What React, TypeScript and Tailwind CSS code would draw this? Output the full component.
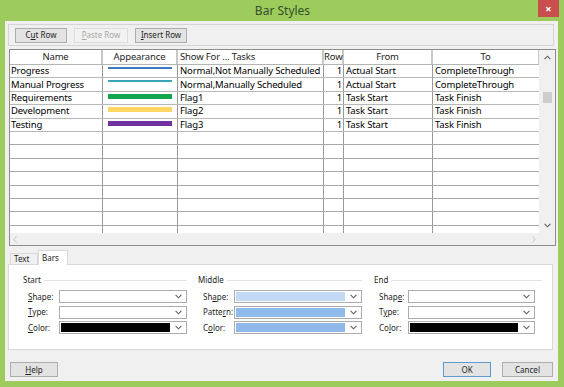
import React from 'react';

const font = 'font-[family-name:Noto_Sans,Open_Sans,sans-serif]';

type Row = {
    name: string;
    color: string;
    thick: boolean;
    show: string;
    from: string;
    to: string;
};

const rows: Row[] = [
    { name: 'Progress', color: '#3d7cc4', thick: false, show: 'Normal,Not Manually Scheduled', from: 'Actual Start', to: 'CompleteThrough' },
    { name: 'Manual Progress', color: '#39a5b8', thick: false, show: 'Normal,Manually Scheduled', from: 'Actual Start', to: 'CompleteThrough' },
    { name: 'Requirements', color: '#13a651', thick: true, show: 'Flag1', from: 'Task Start', to: 'Task Finish' },
    { name: 'Development', color: '#ffd663', thick: true, show: 'Flag2', from: 'Task Start', to: 'Task Finish' },
    { name: 'Testing', color: '#7030a0', thick: true, show: 'Flag3', from: 'Task Start', to: 'Task Finish' },
];

const cols = 'grid grid-cols-[93px_75px_146px_20px_89px_107px]';

function Chevron({ className = '' }: { className?: string }) {
    return (
        <svg width="7" height="5" viewBox="0 0 7 5" className={className}>
            <polyline points="0.6,0.8 3.5,3.8 6.4,0.8" fill="none" stroke="#606060" strokeWidth="1.1" />
        </svg>
    );
}

function Btn({ children, disabled, primary, className = '' }: { children: React.ReactNode; disabled?: boolean; primary?: boolean; className?: string }) {
    return (
        <div
            className={`h-[15px] flex items-center justify-center text-[8px] leading-[10px] border ${
                disabled
                    ? 'bg-[#f2f2f2] border-[#dcdcdc] text-[#a8a8a8]'
                    : primary
                    ? 'bg-[#e3e3e3] border-[#5f9bcf] text-[#1e1e1e]'
                    : 'bg-[#e3e3e3] border-[#adadad] text-[#1e1e1e]'
            } ${className}`}
        >
            {children}
        </div>
    );
}

function Combo({ fill, label, w = 'w-[128px]' }: { fill?: string; label: React.ReactNode; w?: string }) {
    return (
        <div className="flex items-center h-[13px]">
            <div className="flex-1 text-[8px] leading-[10px] text-[#1e1e1e] pl-[5px]">{label}</div>
            <div className={`${w} h-[13px] border border-[#acacac] bg-white flex items-center pl-[1px] pr-[4px]`}>
                <div className="flex-1 h-[9px]" style={fill ? { backgroundColor: fill } : undefined} />
                <Chevron className="ml-[5px]" />
            </div>
        </div>
    );
}

function Group({ title, width, children }: { title: string; width: string; children: React.ReactNode }) {
    return (
        <div className={`${width} flex flex-col`}>
            <div className="h-[12px] flex items-center gap-[3px]">
                <span className="text-[8px] leading-[10px] text-[#1e1e1e]">{title}</span>
                <div className="flex-1 border-t border-[#e3e3e3]" />
            </div>
            <div className="flex flex-col gap-[2.5px] mt-[4px]">{children}</div>
        </div>
    );
}

const U = ({ c }: { c: string }) => <span className="underline underline-offset-[1px]">{c}</span>;

export default function App() {
    const empty = Array.from({ length: 8 });

    return (
        <div className={`w-[564px] h-[387px] bg-[#9dcb5c] flex flex-col overflow-hidden ${font}`}>
            {/* Title bar */}
            <div className="h-[21px] flex items-start">
                <div className="flex-1 pl-[27px] pt-[3px] text-center text-[12px] leading-[15px] text-[#34502a]">Bar Styles</div>
                <div className="w-[21px] h-[17px] mr-[5px] bg-[#c94f4f] flex items-center justify-center text-white text-[11px] font-bold leading-[13px]">
                    ×
                </div>
            </div>

            {/* Body */}
            <div className="ml-[5px] w-[553px] h-[360px] bg-[#f0f0f0] flex flex-col">
                {/* Toolbar */}
                <div className="mt-[3px] ml-[3px] w-[546px] h-[22px] border border-[#d5d5d5] bg-[#f0f0f0] flex items-center pl-[6px] gap-[7px]">
                    <Btn className="w-[52px]">C<U c="u" />t Row</Btn>
                    <Btn className="w-[54px]" disabled><U c="P" />aste Row</Btn>
                    <Btn className="w-[52px]"><U c="I" />nsert Row</Btn>
                </div>

                {/* Table */}
                <div className="mt-[3px] ml-[4px] w-[547px] h-[197px] border border-[#8c8c8c] bg-white flex flex-col text-[9.5px] tracking-[-0.15px] leading-[12px] text-black">
                    <div className="flex h-[183px]">
                        <div className="w-[529px] flex flex-col overflow-hidden">
                            <div className={`${cols} h-[15px] shrink-0 border-b border-[#b5b5b5] text-[#1e1e1e]`}>
                                <div className="border-r-2 border-[#c8c8c8] flex items-center justify-center">Name</div>
                                <div className="border-r-2 border-[#c8c8c8] flex items-center justify-center">Appearance</div>
                                <div className="border-r-2 border-[#c8c8c8] flex items-center pl-[2px]">Show For ... Tasks</div>
                                <div className="border-r-2 border-[#c8c8c8] flex items-center">Row</div>
                                <div className="border-r-2 border-[#c8c8c8] flex items-center justify-center">From</div>
                                <div className="border-r-2 border-[#c8c8c8] flex items-center justify-center">To</div>
                            </div>
                            {rows.map((r) => (
                                <div key={r.name} className={`${cols} h-[13.4px] shrink-0 border-b border-[#b8b8b8]`}>
                                    <div className="border-r border-[#9a9a9a] flex items-center pl-[1px]">{r.name}</div>
                                    <div className="border-r border-[#9a9a9a] pt-[2px] px-[5px]">
                                        <div className={`${r.thick ? 'h-[5px]' : 'h-[2px]'} w-[64px]`} style={{ backgroundColor: r.color }} />
                                    </div>
                                    <div className="border-r border-[#9a9a9a] flex items-center pl-[2px] whitespace-nowrap">{r.show}</div>
                                    <div className="border-r border-[#9a9a9a] flex items-center justify-end pr-[1px]">1</div>
                                    <div className="border-r border-[#9a9a9a] flex items-center pl-[2px]">{r.from}</div>
                                    <div className="border-r border-[#9a9a9a] flex items-center pl-[2px]">{r.to}</div>
                                </div>
                            ))}
                            {empty.map((_, i) => (
                                <div key={i} className={`${cols} h-[13.4px] shrink-0 border-b border-[#a8a8a8]`}>
                                    <div className="border-r border-[#9a9a9a]" />
                                    <div className="border-r border-[#9a9a9a]" />
                                    <div className="border-r border-[#9a9a9a]" />
                                    <div className="border-r border-[#9a9a9a]" />
                                    <div className="border-r border-[#9a9a9a]" />
                                    <div className="border-r border-[#9a9a9a]" />
                                </div>
                            ))}
                        </div>
                        {/* Vertical scrollbar */}
                        <div className="flex-1 bg-[#f0f0f0] flex flex-col items-center">
                            <div className="h-[15px] flex items-center">
                                <Chevron className="rotate-180" />
                            </div>
                            <div className="mt-[27px] w-[9px] h-[11px] bg-[#cdcdcd]" />
                            <div className="flex-1" />
                            <div className="h-[15px] flex items-center">
                                <Chevron />
                            </div>
                        </div>
                    </div>
                    {/* Horizontal scrollbar */}
                    <div className="flex-1 flex">
                        <div className="w-[529px] bg-[#f0f0f0] flex items-center justify-between px-[3px]">
                            <svg width="4" height="7" viewBox="0 0 4 7">
                                <polyline points="3.5,0.5 0.8,3.5 3.5,6.5" fill="none" stroke="#c4c4c4" strokeWidth="1" />
                            </svg>
                            <svg width="4" height="7" viewBox="0 0 4 7">
                                <polyline points="0.5,0.5 3.2,3.5 0.5,6.5" fill="none" stroke="#c4c4c4" strokeWidth="1" />
                            </svg>
                        </div>
                        <div className="flex-1 bg-[#f0f0f0]" />
                    </div>
                </div>

                {/* Tabs */}
                <div className="mt-[4px] ml-[5px] h-[14px] flex items-end text-[8px] leading-[10px] text-[#1e1e1e]">
                    <div className="w-[28px] h-[11px] border border-b-0 border-[#d9d9d9] bg-[#f0f0f0] flex items-center pl-[3px]">Text</div>
                    <div className="w-[30px] h-[15px] border border-b-0 border-[#d9d9d9] bg-white -mb-[1px] relative z-10 flex items-start pt-[2px] pl-[3px]">
                        Bars
                    </div>
                </div>

                {/* Tab panel */}
                <div className="ml-[3px] w-[545px] h-[86px] border border-[#d9d9d9] bg-white flex pt-[9px] pl-[14px]">
                    <Group title="Start" width="w-[164px]">
                        <Combo label={<><U c="S" />hape:</>} />
                        <Combo label={<><U c="T" />ype:</>} />
                        <Combo label={<><U c="C" />olor:</>} fill="#000000" />
                    </Group>
                    <div className="w-[11px]" />
                    <Group title="Middle" width="w-[164px]">
                        <Combo label={<>Sh<U c="a" />pe:</>} fill="#c2daf6" />
                        <Combo label={<>Patte<U c="r" />n:</>} fill="#8dbbec" />
                        <Combo label={<>C<U c="o" />lor:</>} fill="#8eb9ea" />
                    </Group>
                    <div className="w-[12px]" />
                    <Group title="End" width="w-[168px]">
                        <div className="pr-[7px] flex flex-col gap-[2.5px]">
                            <Combo label={<>Shap<U c="e" />:</>} w="w-[127px]" />
                            <Combo label={<>T<U c="y" />pe:</>} w="w-[127px]" />
                            <Combo label={<>Co<U c="l" />or:</>} w="w-[127px]" fill="#000000" />
                        </div>
                    </Group>
                </div>

                {/* Footer buttons */}
                <div className="mt-[12px] flex items-center">
                    <Btn className="ml-[5px] w-[48px]"><U c="H" />elp</Btn>
                    <div className="flex-1" />
                    <Btn className="w-[48px]" primary>OK</Btn>
                    <Btn className="ml-[11px] mr-[5px] w-[51px]">Cancel</Btn>
                </div>
            </div>
        </div>
    );
}
